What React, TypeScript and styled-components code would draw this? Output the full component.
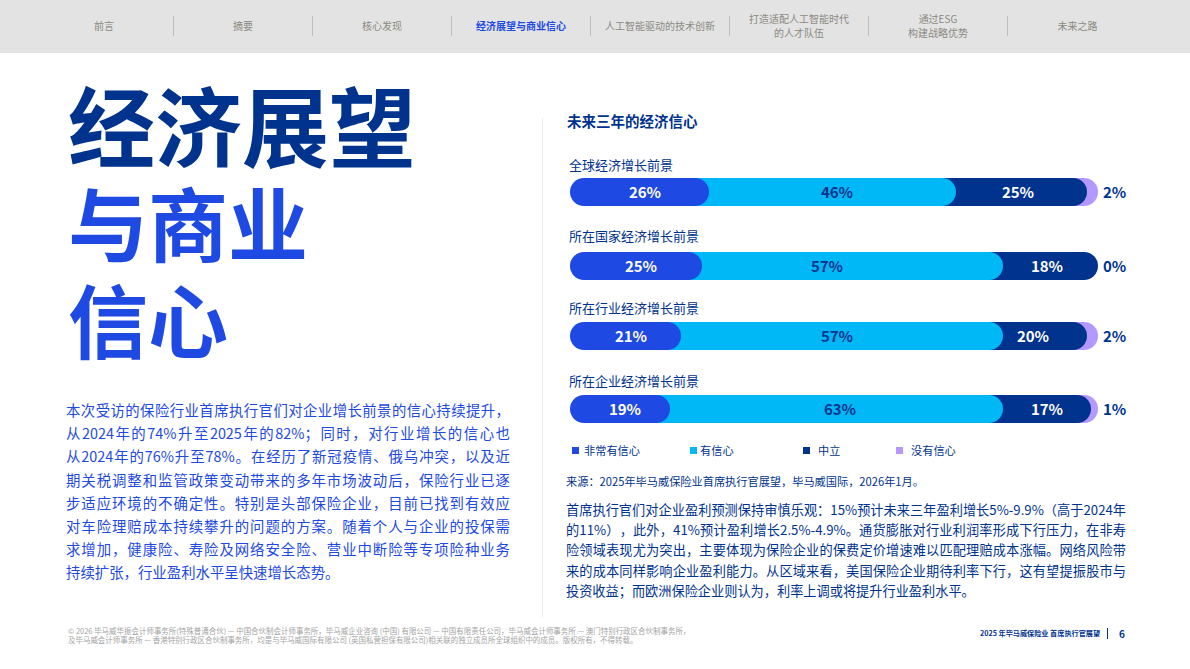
import styled, { createGlobalStyle } from "styled-components";

const BLUE = "#1e49e2";
const SKY = "#00b8f5";
const NAVY = "#00338d";
const PURPLE = "#b497ff";

const navItems = [
  ["前言"],
  ["摘要"],
  ["核心发现"],
  ["经济展望与商业信心"],
  ["人工智能驱动的技术创新"],
  ["打造适配人工智能时代", "的人才队伍"],
  ["通过ESG", "构建战略优势"],
  ["未来之路"],
];

const introLines = [
  "本次受访的保险行业首席执行官们对企业增长前景的信心持续提升，",
  "从2024年的74%升至2025年的82%；同时，对行业增长的信心也",
  "从2024年的76%升至78%。在经历了新冠疫情、俄乌冲突，以及近",
  "期关税调整和监管政策变动带来的多年市场波动后，保险行业已逐",
  "步适应环境的不确定性。特别是头部保险企业，目前已找到有效应",
  "对车险理赔成本持续攀升的问题的方案。随着个人与企业的投保需",
  "求增加，健康险、寿险及网络安全险、营业中断险等专项险种业务",
  "持续扩张，行业盈利水平呈快速增长态势。",
];

const noteLines = [
  "首席执行官们对企业盈利预测保持审慎乐观：15%预计未来三年盈利增长5%-9.9%（高于2024年",
  "的11%），此外，41%预计盈利增长2.5%-4.9%。通货膨胀对行业利润率形成下行压力，在非寿",
  "险领域表现尤为突出，主要体现为保险企业的保费定价增速难以匹配理赔成本涨幅。网络风险带",
  "来的成本同样影响企业盈利能力。从区域来看，美国保险企业期待利率下行，这有望提振股市与",
  "投资收益；而欧洲保险企业则认为，利率上调或将提升行业盈利水平。",
];

// start/end of each segment are read off the picture, label is the text centre
const rows = [
  {
    title: "全球经济增长前景",
    gap: 25,
    titleGap: 4,
    total: "2%",
    parts: [
      { color: BLUE, text: "26%", end: 139, center: 75 },
      { color: SKY, text: "46%", end: 386, center: 267 },
      { color: NAVY, text: "25%", end: 517, center: 448 },
      { color: PURPLE, text: "", end: 528, center: 0 },
    ],
  },
  {
    title: "所在国家经济增长前景",
    gap: 21,
    titleGap: 7,
    total: "0%",
    parts: [
      { color: BLUE, text: "25%", end: 132, center: 71 },
      { color: SKY, text: "57%", end: 433, center: 257 },
      { color: NAVY, text: "18%", end: 528, center: 477 },
    ],
  },
  {
    title: "所在行业经济增长前景",
    gap: 19,
    titleGap: 5,
    total: "2%",
    parts: [
      { color: BLUE, text: "21%", end: 111, center: 61 },
      { color: SKY, text: "57%", end: 433, center: 267 },
      { color: NAVY, text: "20%", end: 517, center: 463 },
      { color: PURPLE, text: "", end: 528, center: 0 },
    ],
  },
  {
    title: "所在企业经济增长前景",
    gap: 22,
    titleGap: 5,
    total: "1%",
    parts: [
      { color: BLUE, text: "19%", end: 100, center: 55 },
      { color: SKY, text: "63%", end: 433, center: 270 },
      { color: NAVY, text: "17%", end: 521, center: 477 },
      { color: PURPLE, text: "", end: 528, center: 0 },
    ],
  },
];

const legend = [
  { color: BLUE, text: "非常有信心", width: 118, gap: 5 },
  { color: SKY, text: "有信心", width: 113, gap: 3 },
  { color: NAVY, text: "中立", width: 93, gap: 8 },
  { color: PURPLE, text: "没有信心", width: 100, gap: 8 },
];

function App() {
  return (
    <>
      <GlobalStyle />
      <Page>
        <Nav>
          {navItems.map((lines, index) => (
            <NavItem key={lines[0]} $last={index === 7}>
              <NavText $active={index === 3}>
                {lines.map((line) => (
                  <div key={line}>{line}</div>
                ))}
              </NavText>
            </NavItem>
          ))}
        </Nav>
        <Main>
          <Left>
            <Title>
              <TitleLine $color={NAVY} $size={87}>经济展望</TitleLine>
              <TitleLine $color={BLUE} $size={80}>与商业</TitleLine>
              <TitleLine $color={BLUE} $size={80}>信心</TitleLine>
            </Title>
            <Intro>
              {introLines.map((line, index) => (
                <FitLine key={line} $last={index === introLines.length - 1}>
                  {line}
                </FitLine>
              ))}
            </Intro>
          </Left>
          <Right>
            <ChartTitle>未来三年的经济信心</ChartTitle>
            {rows.map((row) => (
              <Row key={row.title} $gap={row.gap}>
                <RowTitle $gap={row.titleGap}>{row.title}</RowTitle>
                <BarLine>
                  <Bar>
                    {row.parts.map((part, index) => {
                      const start = index === 0 ? 0 : row.parts[index - 1].end;
                      return (
                        <Segment
                          key={part.color}
                          $color={part.color}
                          $left={start}
                          $width={part.end - start}
                          $layer={9 - index}
                          $first={index === 0}
                        >
                          <SegmentLabel
                            $dark={part.color === SKY}
                            $shift={part.center - (start + part.end) / 2}
                          >
                            {part.text}
                          </SegmentLabel>
                        </Segment>
                      );
                    })}
                  </Bar>
                  <Total>{row.total}</Total>
                </BarLine>
              </Row>
            ))}
            <Legend>
              {legend.map((item) => (
                <LegendItem key={item.text} $width={item.width} $gap={item.gap}>
                  <Swatch $color={item.color} />
                  {item.text}
                </LegendItem>
              ))}
            </Legend>
            <Source>来源：2025年毕马威保险业首席执行官展望，毕马威国际，2026年1月。</Source>
            <Note>
              {noteLines.map((line, index) => (
                <FitLine key={line} $last={index === noteLines.length - 1}>
                  {line}
                </FitLine>
              ))}
            </Note>
          </Right>
        </Main>
        <Footer>
          <Legal>
            <div>
              © 2026 毕马威华振会计师事务所(特殊普通合伙) — 中国合伙制会计师事务所，毕马威企业咨询 (中国) 有限公司 — 中国有限责任公司，毕马威会计师事务所 — 澳门特别行政区合伙制事务所，
            </div>
            <div>
              及毕马威会计师事务所 — 香港特别行政区合伙制事务所，均是与毕马威国际有限公司 (英国私营担保有限公司)相关联的独立成员所全球组织中的成员。版权所有，不得转载。
            </div>
          </Legal>
          <PageMark>
            <Report>2025 年毕马威保险业 首席执行官展望</Report>
            <PageNumber>6</PageNumber>
          </PageMark>
        </Footer>
      </Page>
    </>
  );
}

const GlobalStyle = createGlobalStyle`
  html, body {
    margin: 0;
    padding: 0;
    background: #fff;
  }
  body {
    font-family: "Noto Sans CJK SC", "Noto Sans", sans-serif;
    text-spacing-trim: space-all;
  }
`;

const Page = styled.div`
  width: 1190px;
  height: 669px;
  overflow: hidden;
  display: flex;
  flex-direction: column;
`;

const Nav = styled.nav`
  height: 53px;
  flex: none;
  background: #e3e3e3;
  display: flex;
  align-items: flex-start;
  padding: 16px 0 0 35px;
  box-sizing: border-box;
`;

const NavItem = styled.div<{ $last: boolean }>`
  width: 139px;
  height: 20px;
  display: flex;
  align-items: center;
  justify-content: center;
  box-sizing: border-box;
  border-right: ${(p) => (p.$last ? "none" : "1px solid #bdbdb9")};
`;

const NavText = styled.div<{ $active: boolean }>`
  font-size: 10px;
  line-height: 14px;
  text-align: center;
  white-space: nowrap;
  color: ${(p) => (p.$active ? BLUE : "#8b8a82")};
  font-weight: ${(p) => (p.$active ? 700 : 400)};
`;

const Main = styled.main`
  display: flex;
  align-items: flex-start;
  height: 564px;
  flex: none;
`;

const Left = styled.section`
  width: 542px;
  flex: none;
  box-sizing: border-box;
  padding: 22px 32px 0 66px;
`;

const Title = styled.h1`
  margin: 0 0 0 2px;
  font-weight: 700;
`;

const TitleLine = styled.div<{ $color: string; $size: number }>`
  color: ${(p) => p.$color};
  font-size: ${(p) => p.$size}px;
  line-height: 97px;
  height: 97px;
  white-space: nowrap;
`;

const Intro = styled.div`
  margin-top: 32px;
  font-size: 14.4px;
  line-height: 23.2px;
  color: ${BLUE};
`;

const FitLine = styled.div<{ $last: boolean }>`
  white-space: nowrap;
  text-align: ${(p) => (p.$last ? "left" : "justify")};
  text-align-last: ${(p) => (p.$last ? "left" : "justify")};
`;

const Right = styled.section`
  margin-top: 65px;
  width: 584px;
  height: 499px;
  box-sizing: border-box;
  border-left: 1px solid #ececec;
  padding-left: 24px;
  color: ${NAVY};
`;

const ChartTitle = styled.h2`
  margin: -7px 0 0;
  font-size: 14.5px;
  line-height: 20px;
  font-weight: 700;
  color: ${NAVY};
`;

const Row = styled.div<{ $gap: number }>`
  margin-top: ${(p) => p.$gap}px;
  padding-left: 3px;
`;

const RowTitle = styled.div<{ $gap: number }>`
  font-size: 13px;
  line-height: 18px;
  margin-left: -1px;
  margin-bottom: ${(p) => p.$gap}px;
`;

const BarLine = styled.div`
  display: flex;
  align-items: center;
  gap: 5px;
`;

const Bar = styled.div`
  position: relative;
  width: 528px;
  height: 28px;
  flex: none;
`;

const Segment = styled.div.attrs<{ $left: number; $width: number; $layer: number; $first: boolean }>(
  (p) => ({
    style: {
      left: p.$first ? 0 : p.$left - 14,
      width: p.$first ? p.$width : p.$width + 14,
      zIndex: p.$layer,
      paddingLeft: p.$first ? 0 : 14,
    },
  })
)<{ $color: string; $left: number; $width: number; $layer: number; $first: boolean }>`
  position: absolute;
  top: 0;
  height: 100%;
  box-sizing: border-box;
  border-radius: 0 14px 14px 0;
  border-top-left-radius: ${(p) => (p.$first ? "14px" : "0")};
  border-bottom-left-radius: ${(p) => (p.$first ? "14px" : "0")};
  background: ${(p) => p.$color};
  display: flex;
  align-items: center;
  justify-content: center;
`;

const SegmentLabel = styled.span.attrs<{ $shift: number; $dark: boolean }>((p) => ({
  style: { transform: `translateX(${p.$shift}px)` },
}))<{ $shift: number; $dark: boolean }>`
  font-size: 15px;
  font-weight: 700;
  line-height: 28px;
  color: ${(p) => (p.$dark ? NAVY : "#fff")};
`;

const Total = styled.div`
  font-size: 15px;
  font-weight: 700;
  line-height: 28px;
  color: ${NAVY};
`;

const Legend = styled.div`
  display: flex;
  margin: 19px 0 0 5px;
`;

const LegendItem = styled.div<{ $width: number; $gap: number }>`
  width: ${(p) => p.$width}px;
  flex: none;
  display: flex;
  align-items: center;
  gap: ${(p) => p.$gap}px;
  font-size: 11.2px;
  line-height: 16px;
`;

const Swatch = styled.span<{ $color: string }>`
  width: 7px;
  height: 7px;
  flex: none;
  background: ${(p) => p.$color};
`;

const Source = styled.div`
  margin: 15px 0 0 -1px;
  font-size: 11.2px;
  line-height: 16px;
  white-space: nowrap;
`;

const Note = styled.div`
  margin: 11px 0 0 -1px;
  width: 560px;
  font-size: 13.2px;
  line-height: 20.2px;
`;

const Footer = styled.footer`
  display: flex;
  justify-content: space-between;
  align-items: center;
  padding: 9px 65px 0 68px;
`;

const Legal = styled.div`
  font-size: 7.48px;
  line-height: 9px;
  color: #a3a3a3;
  white-space: nowrap;
`;

const PageMark = styled.div`
  display: flex;
  align-items: center;
  margin-bottom: 3px;
  color: ${NAVY};
`;

const Report = styled.div`
  font-size: 7.15px;
  font-weight: 700;
  line-height: 11px;
  padding-right: 7px;
  border-right: 1px solid ${NAVY};
  white-space: nowrap;
`;

const PageNumber = styled.div`
  font-size: 10px;
  font-weight: 700;
  padding-left: 11px;
`;

export default App;
